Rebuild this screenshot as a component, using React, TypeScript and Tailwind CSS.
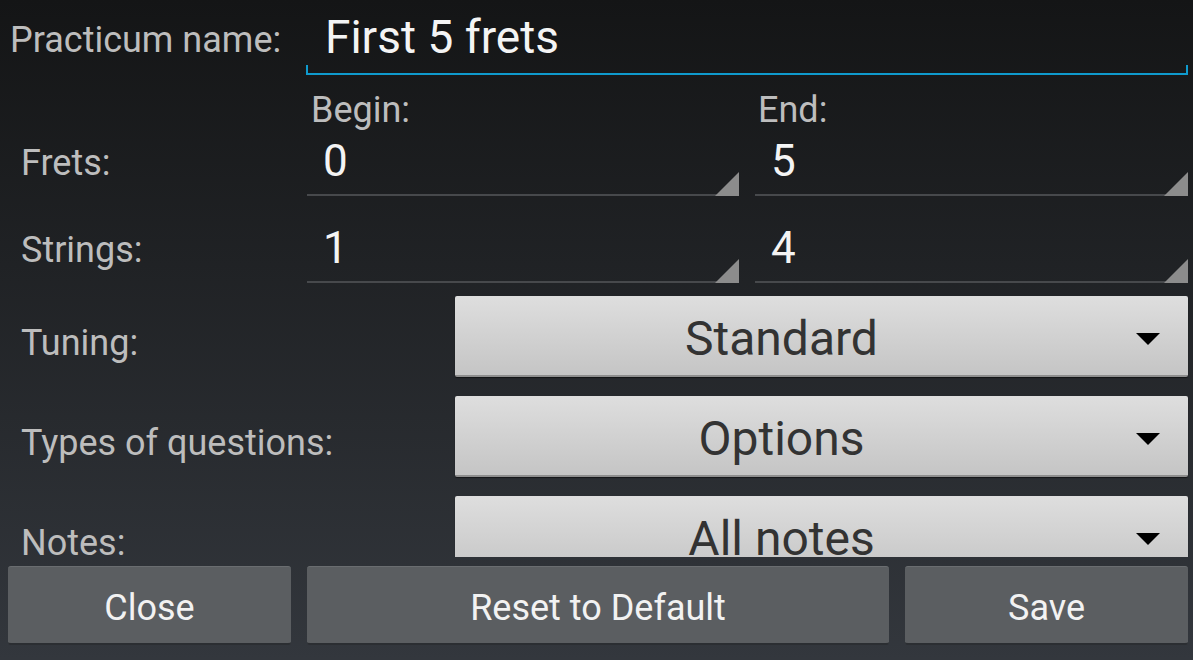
import { ReactNode } from "react";

const font = { fontFamily: "Roboto, 'Noto Sans', sans-serif" };

const Label = ({ children, className = "" }: { children: ReactNode; className?: string }) => (
  <div className={`text-[36px] leading-[42px] text-[#bdbdbd] whitespace-nowrap ${className}`}>{children}</div>
);

// numeric edit field with the holo corner triangle
const NumberField = ({ value }: { value: string }) => (
  <div className="relative h-[61px] border-b-2 border-[#47494c]">
    <div className="pl-[16px] pt-[1px] text-[44px] leading-[50px] text-[#f4f4f4]">{value}</div>
    <svg className="absolute right-0 bottom-[-2px]" width="24" height="24" viewBox="0 0 24 24">
      <polygon points="24,0 24,24 0,24" fill="#8c8c8c" />
    </svg>
  </div>
);

const Spinner = ({ value }: { value: string }) => (
  <div className="relative flex-1 mr-[5px] h-[81px] rounded-[2px] bg-gradient-to-b from-[#dedede] to-[#c5c5c5] border-b-2 border-[#8e8e8e] shadow-[0_1px_1px_rgba(0,0,0,0.5)] flex items-center">
    <div className="flex-1 pr-[80px] pt-[6px] text-center text-[48px] leading-[54px] text-[#333333]">{value}</div>
    <svg className="absolute right-[28px] top-[37px]" width="24" height="12" viewBox="0 0 24 12">
      <polygon points="0,0 24,0 12,12" fill="#000000" />
    </svg>
  </div>
);

const SpinnerRow = ({ label, value }: { label: string; value: string }) => (
  <div className="flex h-[81px]">
    <Label className="w-[455px] pl-[21px] pt-[26px]">{label}</Label>
    <Spinner value={value} />
  </div>
);

const ActionButton = ({ children, className = "" }: { children: ReactNode; className?: string }) => (
  <button className={`h-[79px] pt-[6px] rounded-[3px] bg-[#5b5e61] border-t border-[#6a6d70] border-b-2 border-b-[#2b2e32] text-[36px] leading-[42px] text-[#f2f2f2] ${className}`}>
    {children}
  </button>
);

export default function App() {
  return (
    <div style={font} className="w-[1193px] h-[660px] overflow-hidden bg-gradient-to-b from-[#141516] to-[#33373d] flex flex-col">
      <div className="h-[557px] overflow-hidden">
        {/* name */}
        <div className="flex h-[75px]">
          <Label className="w-[306px] pl-[10px] pt-[19px]">Practicum name:</Label>
          <div className="relative flex-1 mr-[5px] border-b-2 border-[#0f9acd]">
            <div className="pl-[19px] pt-[11px] text-[46px] leading-[52px] text-[#f4f4f4]">First 5 frets</div>
            <div className="absolute left-0 bottom-0 w-[2px] h-[8px] bg-[#0f9acd]" />
            <div className="absolute right-0 bottom-0 w-[2px] h-[8px] bg-[#0f9acd]" />
          </div>
        </div>

        <div className="grid grid-cols-[291px_432px_433px] gap-x-[16px] pr-[5px]">
          <div className="h-[60px]" />
          <Label className="pl-[4px] pt-[14px]">Begin:</Label>
          <Label className="pl-[3px] pt-[14px]">End:</Label>

          <Label className="pl-[21px] pt-[7px]">Frets:</Label>
          <NumberField value="0" />
          <NumberField value="5" />

          <div className="h-[26px] col-span-3" />

          <Label className="pl-[21px] pt-[7px]">Strings:</Label>
          <NumberField value="1" />
          <NumberField value="4" />
        </div>

        <div className="flex flex-col gap-[19px] pt-[13px]">
          <SpinnerRow label="Tuning:" value="Standard" />
          <SpinnerRow label="Types of questions:" value="Options" />
          <SpinnerRow label="Notes:" value="All notes" />
        </div>
      </div>

      <div className="flex gap-[16px] pl-[8px] pr-[5px] pt-[9px]">
        <ActionButton className="w-[283px]">Close</ActionButton>
        <ActionButton className="flex-1">Reset to Default</ActionButton>
        <ActionButton className="w-[283px]">Save</ActionButton>
      </div>
    </div>
  );
}
